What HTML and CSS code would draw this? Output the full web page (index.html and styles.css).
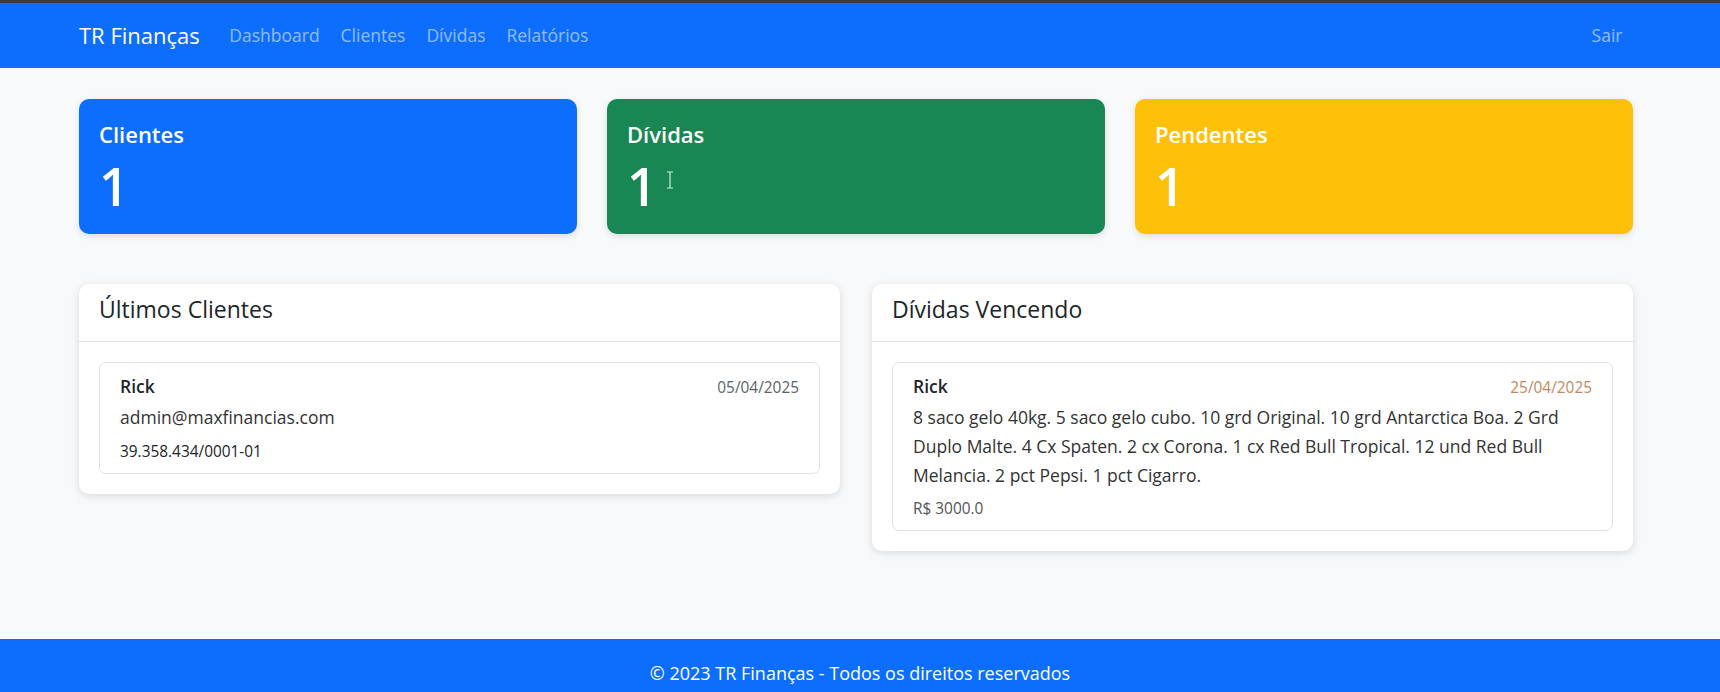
FILE: index.html
```html
<!DOCTYPE html>
<html lang="pt-BR">
<head>
  <meta charset="UTF-8">
  <meta name="viewport" content="width=device-width, initial-scale=1.0">
  <title>TR Finanças - Dashboard</title>
  <link rel="stylesheet" href="styles.css">
</head>
<body>

<nav class="navbar">
  <div class="nav-inner">
    <a class="brand" href="#">TR Finanças</a>
    <ul class="nav-links">
      <li><a href="#">Dashboard</a></li>
      <li><a href="#">Clientes</a></li>
      <li><a href="#">Dívidas</a></li>
      <li><a href="#">Relatórios</a></li>
    </ul>
    <a class="logout" href="#">Sair</a>
  </div>
</nav>

<main class="container">
  <div class="stats">
    <div class="stat stat-blue">
      <h5>Clientes</h5>
      <p class="stat-value">1</p>
    </div>
    <div class="stat stat-green">
      <h5>Dívidas</h5>
      <p class="stat-value">1</p>
      <svg class="cursor" width="8" height="18" viewBox="0 0 8 18">
        <path d="M1 1h6M4 1v16M1 17h6" stroke="#d9e6de" stroke-width="1.2" fill="none"/>
      </svg>
    </div>
    <div class="stat stat-yellow">
      <h5>Pendentes</h5>
      <p class="stat-value">1</p>
    </div>
  </div>

  <div class="panels">
    <section class="panel">
      <div class="panel-header">
        <h5>Últimos Clientes</h5>
      </div>
      <div class="panel-body">
        <div class="item">
          <div class="item-top">
            <span class="item-name">Rick</span>
            <small class="date">05/04/2025</small>
          </div>
          <p>admin@maxfinancias.com</p>
          <small>39.358.434/0001-01</small>
        </div>
      </div>
    </section>

    <section class="panel">
      <div class="panel-header">
        <h5>Dívidas Vencendo</h5>
      </div>
      <div class="panel-body">
        <div class="item">
          <div class="item-top">
            <span class="item-name">Rick</span>
            <small class="date date-due">25/04/2025</small>
          </div>
          <p>8 saco gelo 40kg. 5 saco gelo cubo. 10 grd Original. 10 grd Antarctica Boa. 2 Grd Duplo Malte. 4 Cx Spaten. 2 cx Corona. 1 cx Red Bull Tropical. 12 und Red Bull Melancia. 2 pct Pepsi. 1 pct Cigarro.</p>
          <small class="amount">R$ 3000.0</small>
        </div>
      </div>
    </section>
  </div>
</main>

<footer class="footer">
  <p>© 2023 TR Finanças - Todos os direitos reservados</p>
</footer>

</body>
</html>
```

FILE: styles.css
```css
body {
  margin: 0;
  font-family: "Open Sans", Lato, sans-serif;
  font-size: 17.5px;
  line-height: 1.5;
  background-color: #f8f9fa;
  color: #212529;
}
a {
  text-decoration: none;
}
.navbar {
  background-color: #0d6efd;
  border-top: 3px solid #353b47;
  height: 65px;
}
.nav-inner {
  width: 1554px;
  margin-left: 79px;
  height: 100%;
  display: flex;
  align-items: center;
}
.brand {
  color: #fff;
  font-size: 22px;
  margin-right: 19px;
}
.nav-links {
  display: flex;
  list-style: none;
  margin: 0;
  padding: 0;
}
.nav-links a, .logout {
  display: block;
  color: rgba(255, 255, 255, 0.55);
  padding: 8px 10.5px;
}
.logout {
  margin-left: auto;
}
.container {
  width: 1554px;
  margin-left: 79px;
  padding: 31px 0 88px;
}
.stats {
  display: grid;
  grid-template-columns: repeat(3, 1fr);
  gap: 30px;
}
.stat {
  position: relative;
  height: 135px;
  box-sizing: border-box;
  padding: 22px 20px 14px;
  border-radius: 10px;
  color: #fff;
  box-shadow: 0 2px 6px rgba(0, 0, 0, 0.12);
}
.stat h5 {
  margin: 0 0 7px;
  font-size: 22px;
  font-weight: 600;
  line-height: 26px;
}
.stat-value {
  margin: 0;
  font-size: 52px;
  font-weight: 600;
  line-height: 64px;
}
.stat-blue {
  background-color: #0d6efd;
}
.stat-green {
  background-color: #198754;
}
.stat-yellow {
  background-color: #ffc107;
}
.cursor {
  position: absolute;
  left: 59px;
  top: 72px;
}
.panels {
  margin-top: 50px;
  display: grid;
  grid-template-columns: 1fr 1fr;
  gap: 32px;
  align-items: start;
}
.panel {
  background-color: #fff;
  border-radius: 10px;
  box-shadow: 0 2px 8px rgba(0, 0, 0, 0.13);
}
.panel-header {
  height: 58px;
  box-sizing: border-box;
  padding: 0 20px 6px;
  display: flex;
  align-items: center;
  border-bottom: 1px solid #e3e3e3;
}
.panel-header h5 {
  margin: 0;
  font-size: 23px;
  font-weight: 500;
}
.panel-body {
  padding: 20px;
}
.item {
  border: 1px solid #dee2e6;
  border-radius: 7px;
  padding: 9px 20px 10px;
}
.item-top {
  display: flex;
  justify-content: space-between;
  align-items: baseline;
  line-height: 29px;
}
.item-name {
  font-weight: 600;
}
.item p {
  margin: 2px 0 0;
  line-height: 29px;
  color: #333;
}
.item small {
  display: block;
  margin-top: 8px;
  font-size: 15.4px;
  line-height: 23px;
}
.item-top small.date {
  display: inline;
  margin: 0;
  color: #5c636a;
}
.item-top small.date-due {
  color: #bf8a5e;
}
.item small.amount {
  margin-top: 7px;
  color: #555;
}
.footer {
  background-color: #0d6efd;
  color: #fff;
  text-align: center;
  padding: 21px 0;
}
.footer p {
  margin: 0;
  font-size: 18px;
  line-height: 26px;
}
```
